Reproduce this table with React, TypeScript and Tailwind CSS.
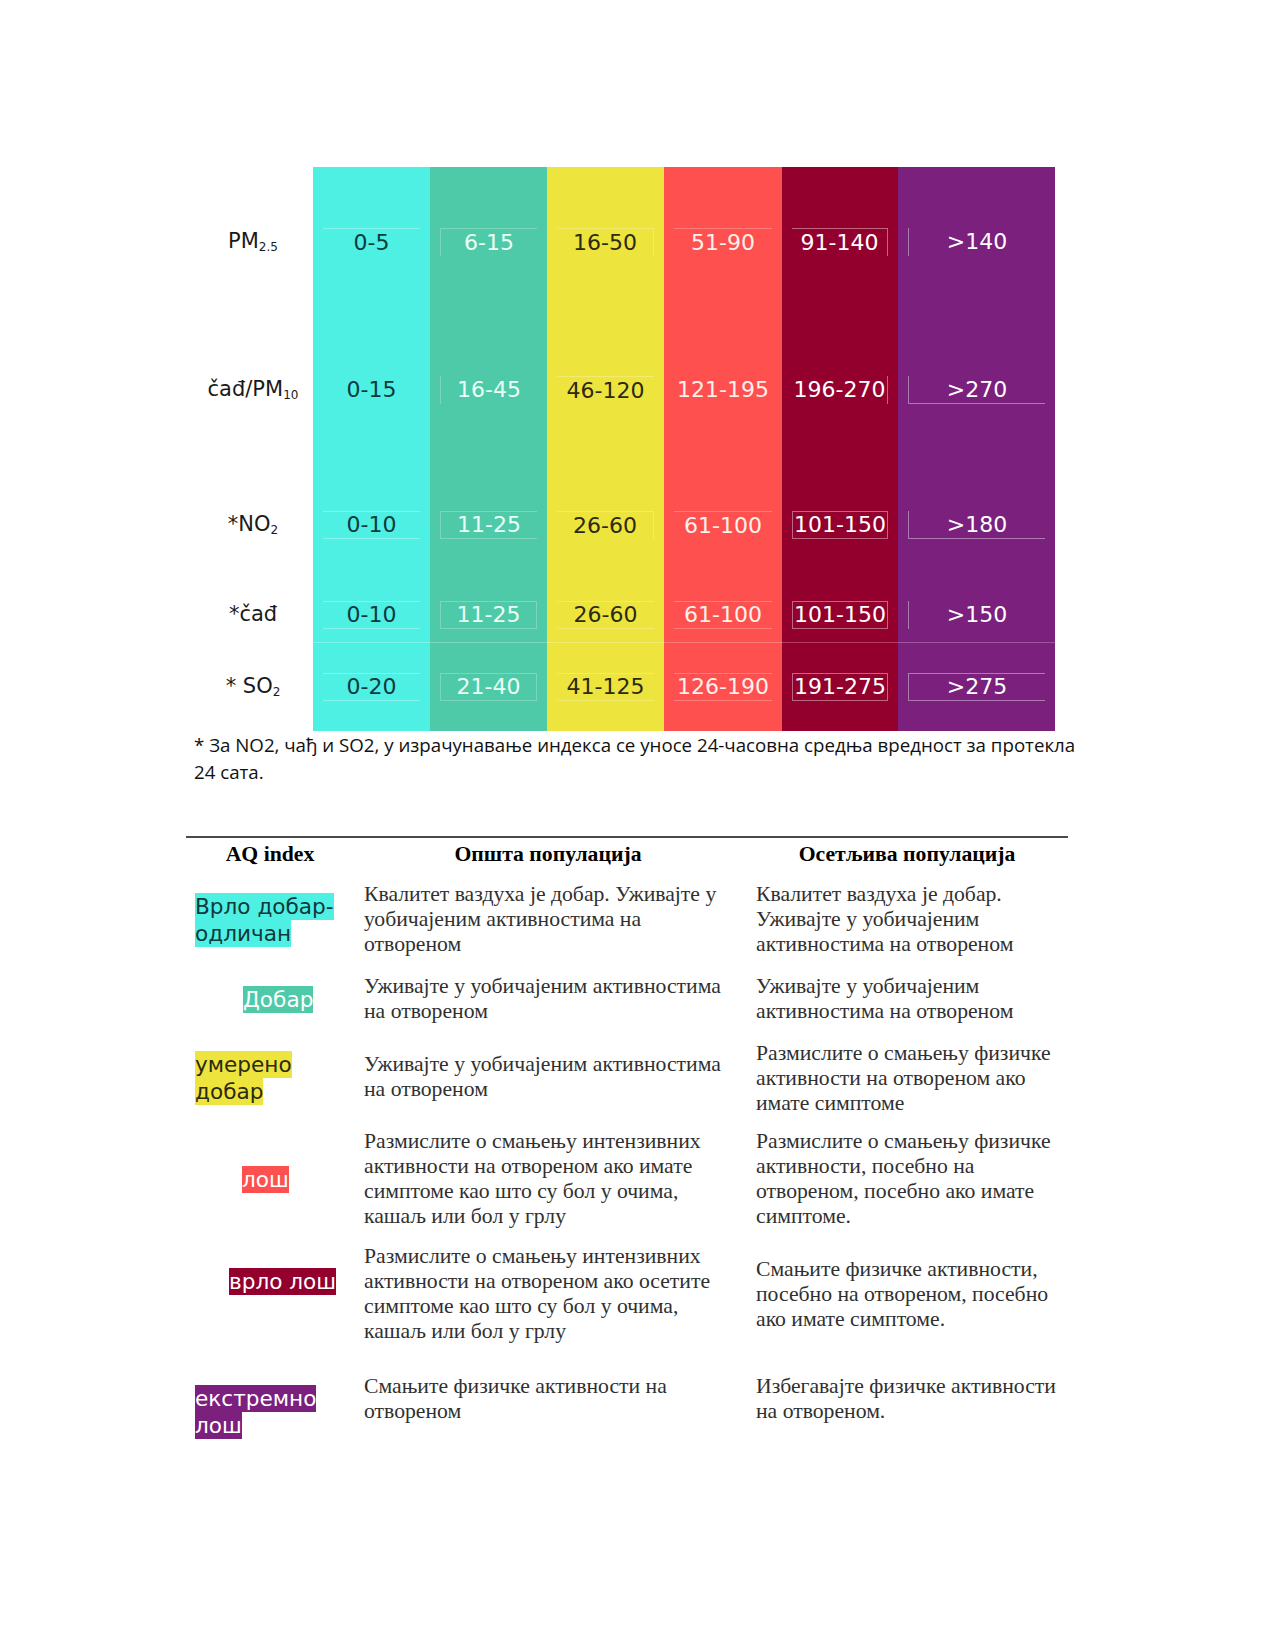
import React from "react";

type Row = { label: React.ReactNode; vals: string[]; sides: string[]; h: string; sep?: boolean };

const colBg = [
  "bg-[#4ff0e4]",
  "bg-[#4ecaa8]",
  "bg-[#eee43e]",
  "bg-[#fe504f]",
  "bg-[#94002e]",
  "bg-[#7b207d]",
];
const colText = [
  "text-[#0d3b3d]",
  "text-[#eafff6]",
  "text-[#2b2a12]",
  "text-[#fff1ec]",
  "text-white",
  "text-white",
];
const colBorder = [
  "border-white/30",
  "border-white/25",
  "border-white/25",
  "border-white/25",
  "border-white/40",
  "border-white/40",
];

const sideClass: Record<string, string> = {
  t: "border-t",
  l: "border-l",
  r: "border-r",
  b: "border-b",
};

const rows: Row[] = [
  {
    label: (
      <>
        PM<sub className="text-[12px]">2.5</sub>
      </>
    ),
    vals: ["0-5", "6-15", "16-50", "51-90", "91-140", ">140"],
    sides: ["t", "tl", "tr", "t", "tr", "l"],
    h: "h-[150px]",
  },
  {
    label: (
      <>
        čađ/PM<sub className="text-[12px]">10</sub>
      </>
    ),
    vals: ["0-15", "16-45", "46-120", "121-195", "196-270", ">270"],
    sides: ["", "l", "t", "", "r", "lb"],
    h: "h-[146px]",
  },
  {
    label: (
      <>
        *NO<sub className="text-[12px]">2</sub>
      </>
    ),
    vals: ["0-10", "11-25", "26-60", "61-100", "101-150", ">180"],
    sides: ["tb", "tlb", "tr", "t", "tlrb", "lb"],
    h: "h-[124px]",
  },
  {
    label: <>*čađ</>,
    vals: ["0-10", "11-25", "26-60", "61-100", "101-150", ">150"],
    sides: ["tb", "tlrb", "tb", "tb", "tlrb", "l"],
    h: "h-[55px]",
  },
  {
    label: (
      <>
        *&nbsp;SO<sub className="text-[12px]">2</sub>
      </>
    ),
    vals: ["0-20", "21-40", "41-125", "126-190", "191-275", ">275"],
    sides: ["tb", "tlrb", "tb", "tb", "tlrb", "tlb"],
    h: "h-[89px]",
    sep: true,
  },
];

const colWidths = ["w-[117px]", "w-[117px]", "w-[117px]", "w-[118px]", "w-[116px]", "w-[157px]"];

function ColorTable() {
  return (
    <div className="ml-[193px] pt-[167px] flex flex-col" style={{ fontFamily: '"DejaVu Sans", Verdana, sans-serif' }}>
      {rows.map((r, ri) => (
        <div key={ri} className={`flex ${r.h}`}>
          <div className="w-[120px] flex items-center justify-center text-[21px] text-[#1a1a1a]">
            <span>{r.label}</span>
          </div>
          {r.vals.map((v, ci) => {
            const borders = r.sides[ci]
              .split("")
              .filter(Boolean)
              .map((s) => sideClass[s])
              .join(" ");
            return (
              <div
                key={ci}
                className={`${colWidths[ci]} ${colBg[ci]} ${colText[ci]} flex items-center px-[10px] ${
                  r.sep ? "border-t border-white/25" : ""
                }`}
              >
                <div
                  className={`w-full h-[28px] flex items-center justify-center text-[22px] leading-none ${borders} ${colBorder[ci]}`}
                >
                  {v}
                </div>
              </div>
            );
          })}
        </div>
      ))}
    </div>
  );
}

function Label({ children, cls, wrap }: { children: React.ReactNode; cls: string; wrap?: string }) {
  return (
    <div
      className={`text-[21.6px] leading-[27px] ${wrap ?? ""}`}
      style={{ fontFamily: '"DejaVu Sans", Verdana, sans-serif' }}
    >
      <span className={`${cls} py-[1px] box-decoration-clone`}>{children}</span>
    </div>
  );
}

function AQTable() {
  const serif = { fontFamily: '"Liberation Serif", "Times New Roman", serif' };
  const body = "text-[21.7px] leading-[25px] text-[#303030]";
  return (
    <div className="ml-[186px] w-[882px] mt-[51px] border-t-2 border-[#4a4a4a]" style={serif}>
      <div className="flex pt-[4px] text-[21.7px] leading-[25px] font-bold text-black">
        <div className="w-[168px] text-center">AQ index</div>
        <div className="w-[10px]" />
        <div className="w-[368px] text-center">Општа популација</div>
        <div className="w-[24px]" />
        <div className="w-[312px] text-center pr-[10px]">Осетљива популација</div>
      </div>

      {/* Row 1 */}
      <div className="flex items-center mt-[15px]">
        <div className="w-[178px] pl-[9px]">
          <Label cls="bg-[#4ff0e4] text-[#10393a]">
            Врло добар-
            <br />
            одличан
          </Label>
        </div>
        <div className={`w-[368px] ${body}`}>Квалитет ваздуха је добар. Уживајте у уобичајеним активностима на отвореном</div>
        <div className="w-[24px]" />
        <div className={`w-[312px] ${body}`}>Квалитет ваздуха је добар. Уживајте у уобичајеним активностима на отвореном</div>
      </div>

      {/* Row 2 */}
      <div className="flex items-center mt-[17px]">
        <div className="w-[178px] pl-[57px]">
          <Label cls="bg-[#4ecaa8] text-white">Добар</Label>
        </div>
        <div className={`w-[368px] ${body}`}>Уживајте у уобичајеним активностима на отвореном</div>
        <div className="w-[24px]" />
        <div className={`w-[312px] ${body}`}>Уживајте у уобичајеним активностима на отвореном</div>
      </div>

      {/* Row 3 */}
      <div className="flex items-start mt-[17px]">
        <div className="w-[178px] pl-[9px] pt-[10px]">
          <Label cls="bg-[#eee43e] text-[#2b2a12]">
            умерено
            <br />
            добар
          </Label>
        </div>
        <div className={`w-[368px] ${body} pt-[11px]`}>Уживајте у уобичајеним активностима на отвореном</div>
        <div className="w-[24px]" />
        <div className={`w-[312px] ${body}`}>Размислите о смањењу физичке активности на отвореном ако имате симптоме</div>
      </div>

      {/* Row 4 */}
      <div className="flex items-center mt-[13px]">
        <div className="w-[178px] pl-[56px]">
          <Label cls="bg-[#fe504f] text-white">лош</Label>
        </div>
        <div className={`w-[368px] ${body}`}>
          Размислите о смањењу интензивних активности на отвореном ако имате симптоме као што су бол у очима, кашаљ или бол у грлу
        </div>
        <div className="w-[24px]" />
        <div className={`w-[312px] ${body}`}>
          Размислите о смањењу физичке активности, посебно на отвореном, посебно ако имате симптоме.
        </div>
      </div>

      {/* Row 5 */}
      <div className="flex items-center mt-[15px]">
        <div className="w-[178px] pl-[43px] pb-[25px]">
          <Label cls="bg-[#94002e] text-white" wrap="whitespace-nowrap">
            врло лош
          </Label>
        </div>
        <div className={`w-[368px] ${body}`}>
          Размислите о смањењу интензивних активности на отвореном ако осетите симптоме као што су бол у очима, кашаљ или бол у грлу
        </div>
        <div className="w-[24px]" />
        <div className={`w-[312px] ${body}`}>
          Смањите физичке активности, посебно на отвореном, посебно ако имате симптоме.
        </div>
      </div>

      {/* Row 6 */}
      <div className="flex items-start mt-[30px]">
        <div className="w-[178px] pl-[9px] pt-[11px]">
          <Label cls="bg-[#7b207d] text-white">
            екстремно
            <br />
            лош
          </Label>
        </div>
        <div className={`w-[368px] ${body}`}>Смањите физичке активности на отвореном</div>
        <div className="w-[24px]" />
        <div className={`w-[312px] ${body}`}>Избегавајте физичке активности на отвореном.</div>
      </div>
    </div>
  );
}

export default function App() {
  return (
    <div className="w-[1275px] min-h-[1650px] bg-white">
      <ColorTable />
      <div
        className="ml-[194px] text-[18.7px] leading-[27px] text-[#111] whitespace-nowrap"
        style={{ fontFamily: '"Open Sans", "Noto Sans", sans-serif' }}
      >
        * За NO2, чађ и SO2, у израчунавање индекса се уносе 24-часовна средња вредност за протекла
        <br />
        24 сата.
      </div>
      <AQTable />
    </div>
  );
}
